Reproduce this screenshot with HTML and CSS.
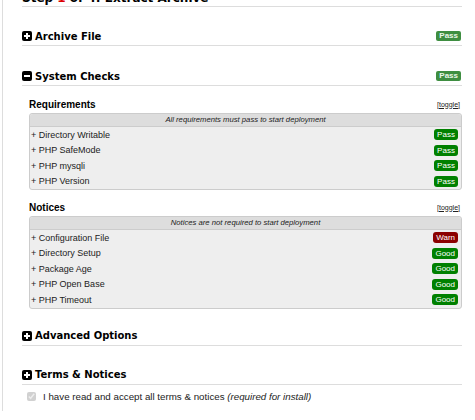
FILE: index.html
```html
<!DOCTYPE html>
<html>
<head>
<meta charset="utf-8">
<link rel="stylesheet" href="styles.css">
</head>
<body>
<div class="page">
  <div class="title">Step <span class="red">1</span> of 4: Extract Archive</div>

  <div class="hdr hdr-first">
    <span class="hicon"><svg width="10" height="10" viewBox="0 0 10 10"><rect x="0" y="0" width="10" height="10" rx="2" fill="#000"/><path d="M5 2v6M2 5h6" stroke="#fff" stroke-width="2"/></svg></span>
    <span class="htext">Archive File</span>
    <span class="badge-h">Pass</span>
  </div>

  <div class="hdr">
    <span class="hicon"><svg width="10" height="10" viewBox="0 0 10 10"><rect x="0" y="0" width="10" height="10" rx="2" fill="#000"/><path d="M2 5h6" stroke="#fff" stroke-width="2"/></svg></span>
    <span class="htext">System Checks</span>
    <span class="badge-h">Pass</span>
  </div>

  <div class="sub">
    <div class="subhead"><span class="subtitle">Requirements</span><span class="toggle">[toggle]</span></div>
    <div class="box">
      <div class="boxhead">All requirements must pass to start deployment</div>
      <div class="row"><span>+ Directory Writable</span><span class="b b-pass">Pass</span></div>
      <div class="row"><span>+ PHP SafeMode</span><span class="b b-pass">Pass</span></div>
      <div class="row"><span>+ PHP mysqli</span><span class="b b-pass">Pass</span></div>
      <div class="row"><span>+ PHP Version</span><span class="b b-pass">Pass</span></div>
    </div>
  </div>

  <div class="sub sub2">
    <div class="subhead"><span class="subtitle">Notices</span><span class="toggle">[toggle]</span></div>
    <div class="box">
      <div class="boxhead">Notices are not required to start deployment</div>
      <div class="row"><span>+ Configuration File</span><span class="b b-warn">Warn</span></div>
      <div class="row"><span>+ Directory Setup</span><span class="b b-pass">Good</span></div>
      <div class="row"><span>+ Package Age</span><span class="b b-pass">Good</span></div>
      <div class="row"><span>+ PHP Open Base</span><span class="b b-pass">Good</span></div>
      <div class="row"><span>+ PHP Timeout</span><span class="b b-pass">Good</span></div>
    </div>
  </div>

  <div class="hdr hdr-adv">
    <span class="hicon"><svg width="10" height="10" viewBox="0 0 10 10"><rect x="0" y="0" width="10" height="10" rx="2" fill="#000"/><path d="M5 2v6M2 5h6" stroke="#fff" stroke-width="2"/></svg></span>
    <span class="htext">Advanced Options</span>
  </div>

  <div class="hdr hdr-terms">
    <span class="hicon"><svg width="10" height="10" viewBox="0 0 10 10"><rect x="0" y="0" width="10" height="10" rx="2" fill="#000"/><path d="M5 2v6M2 5h6" stroke="#fff" stroke-width="2"/></svg></span>
    <span class="htext">Terms &amp; Notices</span>
  </div>

  <div class="accept">
    <input type="checkbox" checked disabled class="chk">
    <span>I have read and accept all terms &amp; notices <i>(required for install)</i></span>
  </div>
</div>
</body>
</html>
```

FILE: styles.css
```css
html, body { margin: 0; padding: 0; background: #fff; overflow: hidden; }
body { font-family: "Liberation Sans", Arial, sans-serif; color: #000; }
.page {
  margin-left: 2px;
  border-left: 1px solid #ddd;
  height: 420px;
  padding: 0 12px 0 19px;
  width: 440px;
  box-sizing: content-box;
}
.title {
  font-family: "DejaVu Sans", Verdana, sans-serif;
  font-weight: bold;
  font-size: 12px;
  line-height: 14px;
  margin-top: -9px;
  padding-bottom: 1px;
  border-bottom: 1px solid #ddd;
}
.red { color: #d00; }
.hdr {
  display: flex;
  align-items: center;
  height: 12px;
  margin-top: 24px;
  padding-bottom: 3px;
  border-bottom: 1px solid #ddd;
  font-family: "DejaVu Sans", Verdana, sans-serif;
  font-weight: bold;
  font-size: 10px;
  color: #000;
}
.hdr-first { margin-top: 23px; }
.hicon { display: flex; width: 10px; height: 10px; margin-right: 3px; }
.htext { flex: 1; }
.badge-h {
  font-family: "Liberation Sans", Arial, sans-serif;
  font-size: 8px;
  font-weight: bold;
  color: #e8f5e8;
  background: #3e8e41;
  border-radius: 2px;
  padding: 0 3px;
  line-height: 10px;
  margin-right: 1px;
}
.sub { padding-left: 7px; margin-top: 12px; }
.sub2 { margin-top: 11px; }
.subhead {
  display: flex;
  justify-content: space-between;
  align-items: center;
  height: 12px;
}
.subtitle { font-size: 10px; font-weight: bold; }
.toggle { font-size: 7px; text-decoration: underline; color: #222; margin-right: 2px; }
.box {
  margin-top: 3px;
  border: 1px solid #ccc;
  border-radius: 3px;
  background: #eee;
}
.boxhead {
  background: #ddd;
  border-bottom: 1px solid #ccc;
  border-radius: 3px 3px 0 0;
  text-align: center;
  font-style: italic;
  font-size: 7.7px;
  line-height: 12px;
  color: #222;
}
.row {
  display: flex;
  justify-content: space-between;
  align-items: center;
  height: 15.5px;
  font-size: 9px;
  color: #222;
  padding: 0 3px 0 1px;
}
.b {
  font-size: 8px;
  color: #fff;
  border-radius: 3px;
  padding: 0 3px;
  line-height: 11px;
  min-width: 18px;
  text-align: center;
}
.b-pass { background: #008000; }
.b-warn { background: #8b0000; }
.hdr-adv { margin-top: 21px; }
.hdr-terms { margin-top: 23px; }
.accept {
  display: flex;
  align-items: center;
  height: 10px;
  margin-top: 7px;
  padding-left: 5px;
  font-size: 9.75px;
  color: #222;
}
.chk { width: 9px; height: 9px; margin: 0 7px 0 0; }
.accept i { color: #222; }
```
